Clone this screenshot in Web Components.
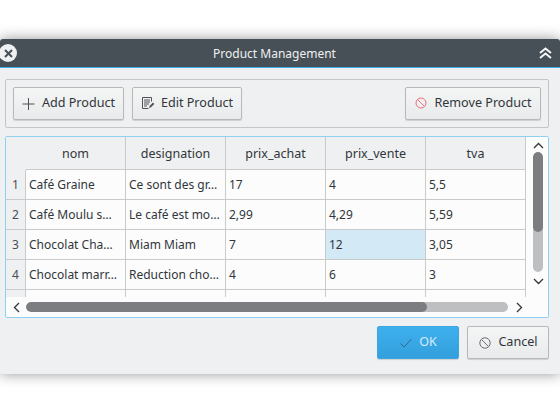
<!DOCTYPE html>
<html><head><meta charset="utf-8"><style>
html,body{margin:0;height:420px;overflow:hidden;background:#fff;font:12px "Noto Sans","Open Sans",sans-serif;color:#31363b}
</style></head><body>
<x-window title="Product Management">
  <x-toolbar>
    <x-button icon="plus">Add Product</x-button>
    <x-button icon="edit">Edit Product</x-button>
    <x-spacer></x-spacer>
    <x-button icon="remove">Remove Product</x-button>
  </x-toolbar>
  <x-table></x-table>
  <x-actions>
    <x-button icon="check" primary>OK</x-button>
    <x-button icon="cancel">Cancel</x-button>
  </x-actions>
</x-window>
<script>
const ICONS={
plus:'<svg width="14" height="14" viewBox="0 0 14 14"><path d="M6.5 1v12M.5 7h12" stroke="#4d5257" stroke-width="1" fill="none"/></svg>',
edit:'<svg width="14" height="14" viewBox="0 0 14 14" fill="none" stroke="#4d5257"><path d="M1.5 .5h9v4M1.5 .5v11h6"/><path d="M3 3h6M3 5h6M3 7h5M3 9h3" stroke-width="1"/><path d="M8 11l.6-2L12 5.6l1.3 1.3L10 10.3z" fill="#4d5257" stroke="none"/></svg>',
remove:'<svg width="14" height="14" viewBox="0 0 14 14" fill="none" stroke="#e9707c" stroke-width="1"><circle cx="7" cy="6" r="5"/><path d="M3.5 2.5l7 7"/></svg>',
check:'<svg width="14" height="14" viewBox="0 0 14 14" fill="none" stroke="#35678c" stroke-width="1"><path d="M1.5 7.5l3.5 3.5 7.5-8"/></svg>',
cancel:'<svg width="14" height="14" viewBox="0 0 14 14" fill="none" stroke="#6a6f74" stroke-width="1"><circle cx="7" cy="7" r="5.2"/><path d="M3.4 3.4l7.2 7.2"/></svg>'};
function def(name,html,init){customElements.define(name,class extends HTMLElement{constructor(){super();this.attachShadow({mode:'open'}).innerHTML=typeof html==='function'?html(this):html;}connectedCallback(){init&&init(this)}})}

def('x-window',`<style>
:host{display:block;margin-top:39px;height:335px;background:#eff0f1;box-shadow:0 0 14px rgba(0,0,0,.42);border-radius:3px 3px 0 0}
.bar{height:28px;background:#475057;border-bottom:1px solid #3daee9;display:flex;align-items:center;justify-content:space-between;color:#eff0f1;border-radius:3px 3px 0 0}
.title{flex:1;text-align:center;font-size:12px}
.close{width:18px;height:18px;margin-left:-1px;border-radius:50%;background:#eff0f1;display:flex;align-items:center;justify-content:center}
.up{width:28px;padding-right:1px;box-sizing:border-box;display:flex;justify-content:center}
.body{padding:11px 11px 15px 5px;display:flex;flex-direction:column}
</style>
<div class="bar"><span class="close"><svg width="9" height="9" viewBox="0 0 9 9"><path d="M1 1l7 7M8 1l-7 7" stroke="#475057" stroke-width="2"/></svg></span><span class="title"></span>
<span class="up"><svg width="13" height="12" viewBox="0 0 13 12" fill="none" stroke="#f5f6f7" stroke-width="2"><path d="M1 6l5.5-4.5L12 6M1 11l5.5-4.5L12 11"/></svg></span></div>
<div class="body"><slot></slot></div>`,e=>{e.shadowRoot.querySelector('.title').textContent=e.getAttribute('title')});

def('x-toolbar',`<style>
:host{display:flex;height:47px;box-sizing:content-box;border:1px solid #c3c5c7;border-radius:2px;padding:0 7px;align-items:center;gap:8px;margin-bottom:8px}
</style><slot></slot>`);
def('x-spacer',`<style>:host{display:block;flex:1}</style>`);
def('x-actions',`<style>:host{display:flex;justify-content:flex-end;gap:8px;margin-top:8px}</style><slot></slot>`);

def('x-button',e=>`<style>
:host{display:flex;box-sizing:border-box;height:33px;align-items:center;justify-content:center;gap:6px;border:1px solid #b6b8ba;border-radius:2px;background:linear-gradient(#f4f5f5,#e9eaeb);box-shadow:0 1px 1px rgba(0,0,0,.14);color:#31363b;padding:0 4px;font-size:12.6px;white-space:nowrap}
:host([primary]){background:linear-gradient(#3eb0ee,#339fdc);border-color:#3aa7e2;color:#d7ecf9}
svg{flex:none;display:block}
.t{margin-bottom:2px}
</style>${ICONS[e.getAttribute('icon')]||''}<span class="t"><slot></slot></span>`,e=>{
 const w={plus:111,edit:110,remove:136,check:82,cancel:82}[e.getAttribute('icon')];e.style.width=w+'px'});

const COLS=['nom','designation','prix_achat','prix_vente','tva'];
const ROWS=[['Café Graine','Ce sont des gr…','17','4','5,5'],['Café Moulu s…','Le café est mo…','2,99','4,29','5,59'],['Chocolat Cha…','Miam Miam','7','12','3,05'],['Chocolat marr…','Reduction cho…','4','6','3'],['','','','','']];
def('x-table',`<style>
:host{display:grid;box-sizing:border-box;height:182px;background:#fcfcfc;border:1px solid #8ed0ef;border-radius:2px;grid-template:160px 20px/1fr 21px;overflow:hidden}
.view{overflow:hidden;height:160px;width:522px;position:relative;background:#fcfcfc}
.grid{display:grid;grid-template-columns:20px repeat(5,100px);grid-template-rows:33px repeat(5,30px)}
.h{background:#eff0f1;border-right:1px solid #c8cacb;border-bottom:1px solid #c8cacb;display:flex;align-items:center;justify-content:center;box-sizing:border-box;white-space:nowrap;font-size:12.5px}
.h.r{color:#4a4f54;font-size:12px}
.h.corner{border-color:#eff0f1}
.c{border-right:1px solid #c8cacb;border-bottom:1px solid #c8cacb;box-sizing:border-box;display:flex;align-items:center;padding-left:3px;white-space:nowrap;overflow:hidden}
.sel{background:#d3e9f6}
.vs{display:flex;flex-direction:column;align-items:center;grid-row:1;grid-column:2;background:#fcfcfc}
.hs{display:flex;align-items:center;grid-row:2;grid-column:1/3;background:#fcfcfc;padding-left:7px;height:20px}
.arrow{flex:none;display:block}
.vt{width:10px;height:120px;margin:3px 0 0 -1px;background:#bdbfc0;border-radius:5px;overflow:hidden}
.vt div{height:80px;background:#7b7d80;border-radius:5px}
.ht{width:482px;height:10px;margin-left:6px;background:#bdbfc0;border-radius:5px;overflow:hidden}
.ht div{width:401px;height:10px;background:#7b7d80;border-radius:5px}
</style>
<div class="view"><div class="grid"></div></div>
<div class="vs"><svg class="arrow" style="margin:5px 0 0 -1px" width="11" height="7" viewBox="0 0 11 7" fill="none" stroke="#31363b" stroke-width="1.3"><path d="M1 6l4.5-4.5L10 6"/></svg><div class="vt"><div></div></div><svg class="arrow" style="margin:6px 0 0 -1px" width="11" height="7" viewBox="0 0 11 7" fill="none" stroke="#31363b" stroke-width="1.3"><path d="M1 1l4.5 4.5L10 1"/></svg></div>
<div class="hs"><svg class="arrow" width="7" height="11" viewBox="0 0 7 11" fill="none" stroke="#31363b" stroke-width="1.3"><path d="M6 1L1.5 5.5 6 10"/></svg><div class="ht"><div></div></div><svg class="arrow" style="margin-left:8px" width="7" height="11" viewBox="0 0 7 11" fill="none" stroke="#31363b" stroke-width="1.3"><path d="M1 1l4.5 4.5L1 10"/></svg></div>`,e=>{
 const g=e.shadowRoot.querySelector('.grid');
 let h='<div class="h corner"></div>'+COLS.map(c=>`<div class="h">${c}</div>`).join('');
 ROWS.forEach((r,i)=>{h+=`<div class="h r">${i+1<5?i+1:''}</div>`+r.map((c,j)=>`<div class="c${i==2&&j==3?' sel':''}">${c}</div>`).join('')});
 g.innerHTML=h;
});
</script></body></html>
